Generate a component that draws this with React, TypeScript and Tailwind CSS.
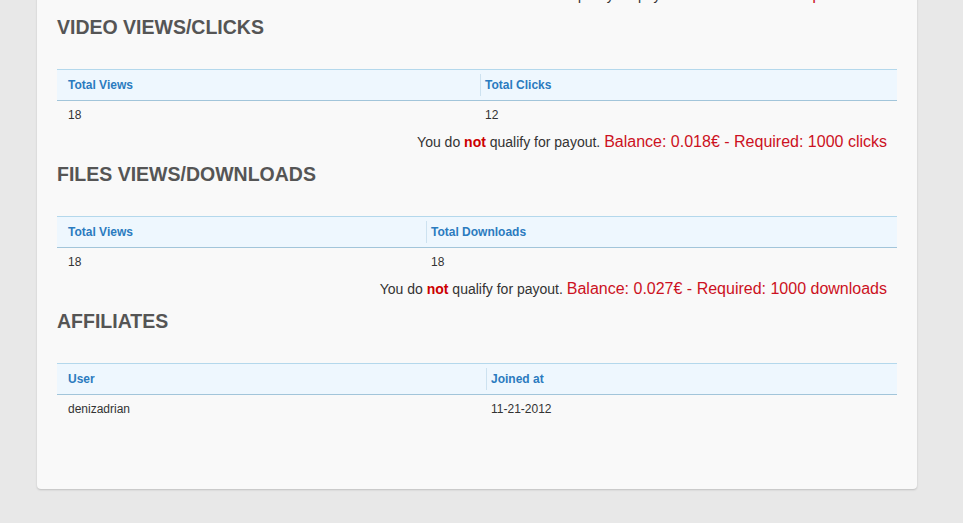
import React from 'react';

interface Column {
  label: string;
  width: number;
}

interface StatsTable {
  title: string;
  columns: Column[];
  row: string[];
  payout?: string;
}

const sections: StatsTable[] = [
  {
    title: 'Video Views/Clicks',
    columns: [
      { label: 'Total Views', width: 423 },
      { label: 'Total Clicks', width: 417 },
    ],
    row: ['18', '12'],
    payout: 'Balance: 0.018€ - Required: 1000 clicks',
  },
  {
    title: 'Files Views/Downloads',
    columns: [
      { label: 'Total Views', width: 369 },
      { label: 'Total Downloads', width: 471 },
    ],
    row: ['18', '18'],
    payout: 'Balance: 0.027€ - Required: 1000 downloads',
  },
  {
    title: 'Affiliates',
    columns: [
      { label: 'User', width: 429 },
      { label: 'Joined at', width: 411 },
    ],
    row: ['denizadrian', '11-21-2012'],
  },
];

const PayoutNotice: React.FC<{ text: string }> = ({ text }) => (
  <div className="h-[22px] whitespace-nowrap pr-[10px] text-right text-[14px] leading-[22px] text-[#333]">
    You do <b className="text-[#cc0000]">not</b> qualify for payout.{' '}
    <span className="text-[16px] text-[#cc1122]">{text}</span>
  </div>
);

const Section: React.FC<{ data: StatsTable }> = ({ data }) => (
  <div>
    <h2 className="mt-[9px] h-6 text-[19.5px] font-bold uppercase leading-6 text-[#555]">
      {data.title}
    </h2>
    <div className="mt-[30px]">
      <div className="flex h-[32px] items-center border-y border-t-[#b4d8ec] border-b-[#a2c5da] bg-[#eef7fe] text-[12px] font-bold text-[#2b7bbf]">
        {data.columns.map((col, i) =>
          i === 0 ? (
            <div key={col.label} style={{ width: col.width }} className="pl-[11px]">
              {col.label}
            </div>
          ) : (
            <div
              key={col.label}
              style={{ width: col.width }}
              className="flex h-[22px] items-center border-l border-[#cde2f0] pl-1"
            >
              {col.label}
            </div>
          )
        )}
      </div>
      <div className="flex h-[28px] items-center text-[12px] text-[#333]">
        {data.row.map((cell, i) => (
          <div
            key={i}
            style={{ width: data.columns[i].width }}
            className={i === 0 ? 'pl-[11px]' : 'pl-[5px]'}
          >
            {cell}
          </div>
        ))}
      </div>
    </div>
    {data.payout && (
      <div className="mt-[2px]">
        <PayoutNotice text={data.payout} />
      </div>
    )}
  </div>
);

export default function App() {
  return (
    <div className="h-[523px] overflow-hidden bg-[#e8e8e8] font-['Liberation_Sans',Arial,sans-serif]">
      <div className="-mt-[16px] ml-[37px] w-[880px] rounded-b-[4px] bg-[#f9f9f9] px-5 pb-[66px] shadow-[0_1px_2px_rgba(0,0,0,0.18)]">
        {/* хвост предыдущего блока, обрезан скроллом */}
        <PayoutNotice text="Balance: 0€ - Required: 100" />
        {sections.map((s) => (
          <Section key={s.title} data={s} />
        ))}
      </div>
    </div>
  );
}
